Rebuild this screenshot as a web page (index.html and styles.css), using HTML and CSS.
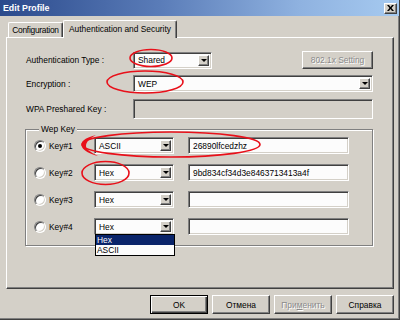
FILE: index.html
```html
<!DOCTYPE html>
<html>

<head>
  <meta charset="utf-8">
  <title>Edit Profile</title>
  <link rel="stylesheet" href="styles.css">
</head>

<body>
  <div class="window">
    <div class="titlebar">
      <span class="title">Edit Profile</span>
      <span class="close">
        <svg width="7" height="6" viewBox="0 0 7 6"><path d="M0 0h2l1.5 2L5 0h2L4.5 3 7 6H5L3.5 4 2 6H0l2.5-3z" fill="#000"/></svg>
      </span>
    </div>

    <div class="tabs">
      <div class="tab">Configuration</div>
      <div class="tab active">Authentication and Security</div>
    </div>

    <div class="panel">
      <div class="row row-auth">
        <span class="label">Authentication Type :</span>
        <div class="combo combo-short"><span class="value">Shared</span><span class="arrow"></span></div>
        <div class="btn btn-setting disabled">802.1x Setting</div>
      </div>
      <div class="row row-enc">
        <span class="label">Encryption :</span>
        <div class="combo combo-wide"><span class="value">WEP</span><span class="arrow"></span></div>
      </div>
      <div class="row row-wpa">
        <span class="label">WPA Preshared Key :</span>
        <div class="field field-wide disabled"></div>
      </div>

      <fieldset class="group">
        <legend>Wep Key</legend>
        <div class="key-row">
          <span class="key-label"><span class="radio checked"></span>Key#1</span>
          <div class="combo combo-key"><span class="value">ASCII</span><span class="arrow"></span></div>
          <div class="field field-key">26890lfcedzhz</div>
        </div>
        <div class="key-row">
          <span class="key-label"><span class="radio"></span>Key#2</span>
          <div class="combo combo-key"><span class="value">Hex</span><span class="arrow"></span></div>
          <div class="field field-key">9bd834cf34d3e8463713413a4f</div>
        </div>
        <div class="key-row">
          <span class="key-label"><span class="radio"></span>Key#3</span>
          <div class="combo combo-key"><span class="value">Hex</span><span class="arrow"></span></div>
          <div class="field field-key"></div>
        </div>
        <div class="key-row">
          <span class="key-label"><span class="radio"></span>Key#4</span>
          <div class="combo combo-key"><span class="value">Hex</span><span class="arrow"></span></div>
          <div class="field field-key"></div>
        </div>
      </fieldset>
    </div>

    <div class="actions">
      <div class="btn btn-action default">OK</div>
      <div class="btn btn-action">Отмена</div>
      <div class="btn btn-action disabled">При<u>м</u>енить</div>
      <div class="btn btn-action">Справка</div>
    </div>

    <!-- open list of the Key#4 combo -->
    <div class="dropdown">
      <div class="option selected">Hex</div>
      <div class="option">ASCII</div>
    </div>

    <!-- red marker circles drawn over the dialog -->
    <svg class="marks" width="400" height="320" viewBox="0 0 400 320">
      <g fill="none" stroke="#e8101a" stroke-width="1.6">
        <ellipse cx="151" cy="58" rx="21" ry="8.5"/>
        <ellipse cx="145" cy="82" rx="38" ry="11"/>
        <ellipse cx="171" cy="144.5" rx="89" ry="12.5"/>
        <ellipse cx="105.5" cy="173" rx="23.5" ry="11.5"/>
      </g>
      <path d="M96 135 C84 138 80 142 82 147 C84 151 90 154 98 156 C90 152 86 149 86 146 C86 142 90 138 96 135z" fill="#e8101a"/>
    </svg>
  </div>
</body>

</html>
```

FILE: styles.css
```css
body {
	margin: 0;
	background-color: #d4d0c8;
	color: #000;
	font-family: "Liberation Sans", Arial, sans-serif;
	font-size: 8.4px;
}

.window {
	position: relative;
	width: 400px;
	height: 320px;
	box-sizing: border-box;
	overflow: hidden;
	background-color: #d4d0c8;
	border-right: 1px solid #404040;
	border-bottom: 1px solid #404040;
	box-shadow: inset -1px -1px 0 #808080;
}

.titlebar {
	display: flex;
	align-items: center;
	justify-content: space-between;
	height: 16px;
	padding: 0 2px 0 3px;
	background: linear-gradient(to right, #2b4a8c 0%, #5a7cb8 40%, #8fb2e0 75%, #a6caf0 100%);
	color: white;
}

.title {
	font-weight: bold;
	font-size: 8.8px;
}

.close {
	display: flex;
	align-items: center;
	justify-content: center;
	width: 13px;
	height: 11px;
	box-sizing: border-box;
	background-color: #d4d0c8;
	border: 1px solid;
	border-color: #fff #404040 #404040 #fff;
	box-shadow: inset -1px -1px 0 #808080;
}

.tabs {
	display: flex;
	align-items: flex-end;
	height: 21px;
	padding-left: 8px;
}

.tab {
	display: flex;
	align-items: center;
	justify-content: center;
	box-sizing: border-box;
	height: 15px;
	width: 55px;
	border-top: 1px solid #fff;
	border-left: 1px solid #fff;
	border-right: 1px solid #404040;
	border-radius: 2px 2px 0 0;
	box-shadow: inset -1px 0 0 #808080;
	letter-spacing: -0.25px;
	white-space: nowrap;
}

.tab.active {
	position: relative;
	z-index: 1;
	height: 18px;
	width: 114px;
	margin-bottom: -1px;
	padding-bottom: 2px;
	background-color: #d4d0c8;
	letter-spacing: 0;
}

.panel {
	box-sizing: border-box;
	width: 388px;
	height: 252px;
	margin-left: 6px;
	padding: 13px 20px 0 19px;
	border-top: 1px solid #fff;
	border-left: 1px solid #fff;
	border-right: 1px solid #404040;
	border-bottom: 1px solid #404040;
	box-shadow: inset -1px -1px 0 #808080;
}

.row {
	display: flex;
	align-items: center;
}

.label {
	width: 107px;
	flex: none;
	white-space: nowrap;
}

.row-auth {
	height: 18px;
}

.row-enc {
	height: 17px;
	margin-top: 6px;
}

.row-wpa {
	height: 20px;
	margin-top: 7px;
}

.combo,
.field {
	display: flex;
	align-items: center;
	box-sizing: border-box;
	height: 17px;
	padding: 2px;
	background-color: #fcfcfc;
	border: 1px solid;
	border-color: #808080 #fff #fff #808080;
	box-shadow: inset 1px 1px 0 #404040, inset -1px -1px 0 #d4d0c8;
	white-space: nowrap;
}

.combo .value {
	flex: 1;
	padding-left: 2px;
}

.combo .arrow {
	display: flex;
	align-items: center;
	justify-content: center;
	box-sizing: border-box;
	width: 11px;
	height: 100%;
	background-color: #d4d0c8;
	border: 1px solid;
	border-color: #fff #404040 #404040 #fff;
	box-shadow: inset -1px -1px 0 #808080;
}

.combo .arrow::after {
	content: "";
	border-top: 3px solid #000;
	border-left: 3px solid transparent;
	border-right: 3px solid transparent;
}

.combo-short {
	width: 79px;
}

.combo-wide {
	flex: 1;
}

.combo-key {
	width: 80px;
}

.field {
	padding-left: 4px;
}

.field-wide {
	flex: 1;
	height: 20px;
}

.field.disabled {
	background-color: #d4d0c8;
}

.field-key {
	width: 161px;
	margin-left: 14px;
}

.btn {
	display: flex;
	align-items: center;
	justify-content: center;
	box-sizing: border-box;
	background-color: #d4d0c8;
	border: 1px solid;
	border-color: #fff #404040 #404040 #fff;
	box-shadow: inset -1px -1px 0 #808080;
	white-space: nowrap;
}

.btn.disabled {
	color: #8a8a8a;
	text-shadow: 1px 1px 0 #fff;
}

.btn-setting {
	width: 71px;
	height: 18px;
	margin-left: auto;
}

.group {
	margin: 5px 0 0 -1px;
	padding: 3px 0 0 8px;
	height: 122px;
	box-sizing: border-box;
	border: 1px solid #808080;
	box-shadow: 1px 1px 0 #fff, inset 1px 1px 0 #fff;
}

.group legend {
	margin-left: 5px;
	padding: 0 2px;
	background-color: #d4d0c8;
}

.key-row {
	display: flex;
	align-items: center;
	height: 17px;
	margin-bottom: 10px;
}

.key-label {
	display: flex;
	align-items: center;
	width: 60px;
	flex: none;
}

.radio {
	position: relative;
	width: 12px;
	height: 12px;
	box-sizing: border-box;
	margin-right: 3px;
	border-radius: 50%;
	background-color: #fff;
	border: 1px solid;
	border-color: #808080 #fff #fff #808080;
	box-shadow: inset 1px 1px 0 #404040, inset -1px -1px 0 #d4d0c8;
}

.radio.checked::after {
	content: "";
	position: absolute;
	left: 3px;
	top: 3px;
	width: 4px;
	height: 4px;
	border-radius: 50%;
	background-color: #000;
}

.actions {
	display: flex;
	justify-content: flex-end;
	gap: 4px;
	padding: 6px 5px 0 0;
}

.btn-action {
	width: 58px;
	height: 19px;
}

.btn.default {
	border-color: #000;
	box-shadow: inset 1px 1px 0 #fff, inset -1px -1px 0 #404040, inset -2px -2px 0 #808080;
}

.dropdown {
	position: absolute;
	left: 95px;
	top: 234px;
	width: 80px;
	box-sizing: border-box;
	background-color: #fcfcfc;
	border: 1px solid #000;
}

.option {
	height: 10px;
	line-height: 10px;
	padding-left: 1px;
}

.option.selected {
	background-color: #0a246a;
	color: white;
}

.marks {
	position: absolute;
	left: 0;
	top: 0;
	pointer-events: none;
}
```
